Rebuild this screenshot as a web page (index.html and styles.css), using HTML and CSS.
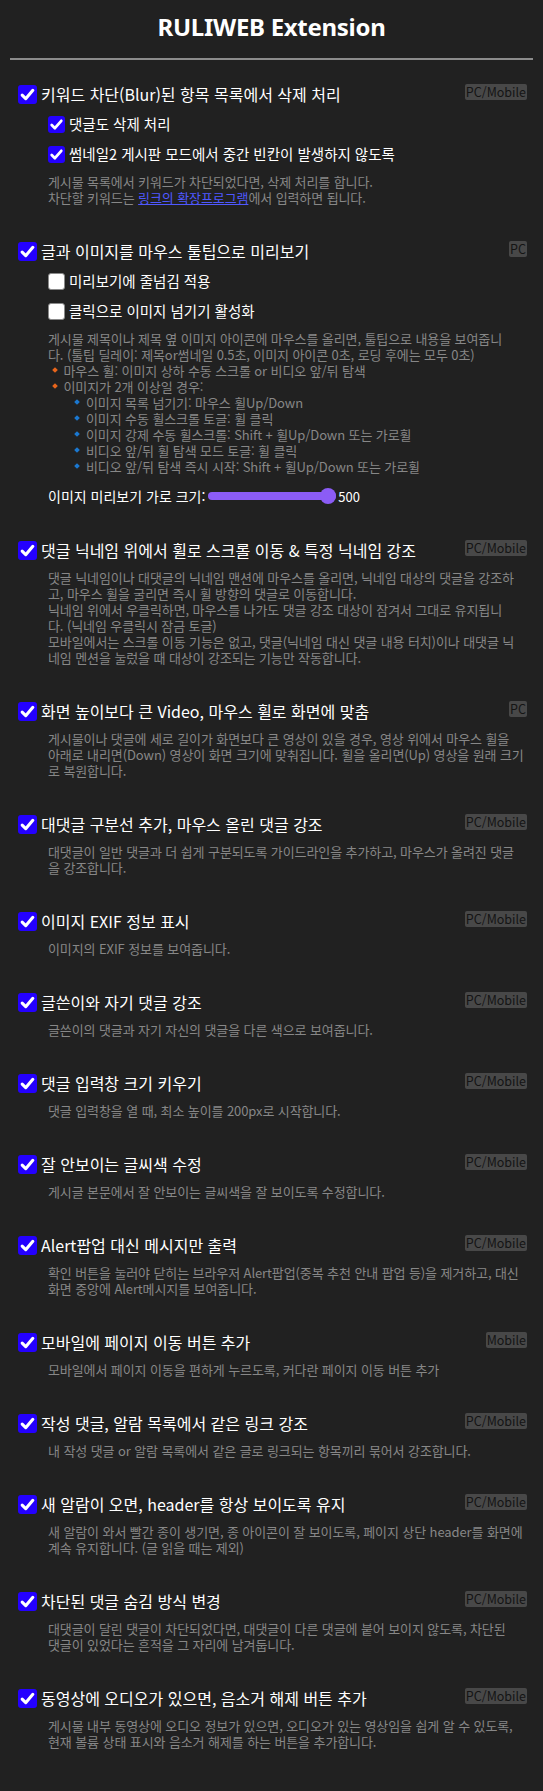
FILE: index.html
```html
<!DOCTYPE html>
<html lang="ko">
<head>
<meta charset="utf-8">
<title>RULIWEB Extension</title>
<link rel="stylesheet" href="styles.css">
</head>
<body>
<div class="page">
  <h1 class="title">RULIWEB Extension</h1>
  <hr class="divider">
  <ul class="options">
    <li class="option">
      <span class="badge">PC/Mobile</span>
      <label class="row main"><span class="box on"><svg viewBox="0 0 16 16"><path d="M3.5 8.5l3 3 6-7"/></svg></span><span>키워드 차단(Blur)된 항목 목록에서 삭제 처리</span></label>
      <label class="row sub"><span class="box on"><svg viewBox="0 0 16 16"><path d="M3.5 8.5l3 3 6-7"/></svg></span><span>댓글도 삭제 처리</span></label>
      <label class="row sub"><span class="box on"><svg viewBox="0 0 16 16"><path d="M3.5 8.5l3 3 6-7"/></svg></span><span>썸네일2 게시판 모드에서 중간 빈칸이 발생하지 않도록</span></label>
      <p class="desc">게시물 목록에서 키워드가 차단되었다면, 삭제 처리를 합니다.<br>차단할 키워드는 <a class="link" href="#">링크의 확장프로그램</a>에서 입력하면 됩니다.</p>
    </li>
    <li class="option">
      <span class="badge">PC</span>
      <label class="row main"><span class="box on"><svg viewBox="0 0 16 16"><path d="M3.5 8.5l3 3 6-7"/></svg></span><span>글과 이미지를 마우스 툴팁으로 미리보기</span></label>
      <label class="row sub"><span class="box off"></span><span>미리보기에 줄넘김 적용</span></label>
      <label class="row sub"><span class="box off"></span><span>클릭으로 이미지 넘기기 활성화</span></label>
      <div class="desc">
        게시물 제목이나 제목 옆 이미지 아이콘에 마우스를 올리면, 툴팁으로 내용을 보여줍니<br>다. (툴팁 딜레이: 제목or썸네일 0.5초, 이미지 아이콘 0초, 로딩 후에는 모두 0초)
        <ul class="bullets">
          <li>마우스 휠: 이미지 상하 수동 스크롤 or 비디오 앞/뒤 탐색</li>
          <li>이미지가 2개 이상일 경우:
            <ul class="bullets inner">
              <li>이미지 목록 넘기기: 마우스 휠Up/Down</li>
              <li>이미지 수동 휠스크롤 토글: 휠 클릭</li>
              <li>이미지 강제 수동 휠스크롤: Shift + 휠Up/Down 또는 가로휠</li>
              <li>비디오 앞/뒤 휠 탐색 모드 토글: 휠 클릭</li>
              <li>비디오 앞/뒤 탐색 즉시 시작: Shift + 휠Up/Down 또는 가로휠</li>
            </ul>
          </li>
        </ul>
      </div>
      <div class="slider-row">
        <span class="slider-label">이미지 미리보기 가로 크기:</span>
        <input class="slider" type="range" min="100" max="500" value="500">
        <span class="slider-value">500</span>
      </div>
    </li>
    <li class="option">
      <span class="badge">PC/Mobile</span>
      <label class="row main"><span class="box on"><svg viewBox="0 0 16 16"><path d="M3.5 8.5l3 3 6-7"/></svg></span><span>댓글 닉네임 위에서 휠로 스크롤 이동 &amp; 특정 닉네임 강조</span></label>
      <p class="desc">댓글 닉네임이나 대댓글의 닉네임 맨션에 마우스를 올리면, 닉네임 대상의 댓글을 강조하<br>고, 마우스 휠을 굴리면 즉시 휠 방향의 댓글로 이동합니다.<br>닉네임 위에서 우클릭하면, 마우스를 나가도 댓글 강조 대상이 잠겨서 그대로 유지됩니<br>다. (닉네임 우클릭시 잠금 토글)<br>모바일에서는 스크롤 이동 기능은 없고, 댓글(닉네임 대신 댓글 내용 터치)이나 대댓글 닉<br>네임 멘션을 눌렀을 때 대상이 강조되는 기능만 작동합니다.</p>
    </li>
    <li class="option">
      <span class="badge">PC</span>
      <label class="row main"><span class="box on"><svg viewBox="0 0 16 16"><path d="M3.5 8.5l3 3 6-7"/></svg></span><span>화면 높이보다 큰 Video, 마우스 휠로 화면에 맞춤</span></label>
      <p class="desc">게시물이나 댓글에 세로 길이가 화면보다 큰 영상이 있을 경우, 영상 위에서 마우스 휠을<br>아래로 내리면(Down) 영상이 화면 크기에 맞춰집니다. 휠을 올리면(Up) 영상을 원래 크기<br>로 복원합니다.</p>
    </li>
    <li class="option">
      <span class="badge">PC/Mobile</span>
      <label class="row main"><span class="box on"><svg viewBox="0 0 16 16"><path d="M3.5 8.5l3 3 6-7"/></svg></span><span>대댓글 구분선 추가, 마우스 올린 댓글 강조</span></label>
      <p class="desc">대댓글이 일반 댓글과 더 쉽게 구분되도록 가이드라인을 추가하고, 마우스가 올려진 댓글<br>을 강조합니다.</p>
    </li>
    <li class="option">
      <span class="badge">PC/Mobile</span>
      <label class="row main"><span class="box on"><svg viewBox="0 0 16 16"><path d="M3.5 8.5l3 3 6-7"/></svg></span><span>이미지 EXIF 정보 표시</span></label>
      <p class="desc">이미지의 EXIF 정보를 보여줍니다.</p>
    </li>
    <li class="option">
      <span class="badge">PC/Mobile</span>
      <label class="row main"><span class="box on"><svg viewBox="0 0 16 16"><path d="M3.5 8.5l3 3 6-7"/></svg></span><span>글쓴이와 자기 댓글 강조</span></label>
      <p class="desc">글쓴이의 댓글과 자기 자신의 댓글을 다른 색으로 보여줍니다.</p>
    </li>
    <li class="option">
      <span class="badge">PC/Mobile</span>
      <label class="row main"><span class="box on"><svg viewBox="0 0 16 16"><path d="M3.5 8.5l3 3 6-7"/></svg></span><span>댓글 입력창 크기 키우기</span></label>
      <p class="desc">댓글 입력창을 열 때, 최소 높이를 200px로 시작합니다.</p>
    </li>
    <li class="option">
      <span class="badge">PC/Mobile</span>
      <label class="row main"><span class="box on"><svg viewBox="0 0 16 16"><path d="M3.5 8.5l3 3 6-7"/></svg></span><span>잘 안보이는 글씨색 수정</span></label>
      <p class="desc">게시글 본문에서 잘 안보이는 글씨색을 잘 보이도록 수정합니다.</p>
    </li>
    <li class="option">
      <span class="badge">PC/Mobile</span>
      <label class="row main"><span class="box on"><svg viewBox="0 0 16 16"><path d="M3.5 8.5l3 3 6-7"/></svg></span><span>Alert팝업 대신 메시지만 출력</span></label>
      <p class="desc">확인 버튼을 눌러야 닫히는 브라우저 Alert팝업(중복 추천 안내 팝업 등)을 제거하고, 대신<br>화면 중앙에 Alert메시지를 보여줍니다.</p>
    </li>
    <li class="option">
      <span class="badge">Mobile</span>
      <label class="row main"><span class="box on"><svg viewBox="0 0 16 16"><path d="M3.5 8.5l3 3 6-7"/></svg></span><span>모바일에 페이지 이동 버튼 추가</span></label>
      <p class="desc">모바일에서 페이지 이동을 편하게 누르도록, 커다란 페이지 이동 버튼 추가</p>
    </li>
    <li class="option">
      <span class="badge">PC/Mobile</span>
      <label class="row main"><span class="box on"><svg viewBox="0 0 16 16"><path d="M3.5 8.5l3 3 6-7"/></svg></span><span>작성 댓글, 알람 목록에서 같은 링크 강조</span></label>
      <p class="desc">내 작성 댓글 or 알람 목록에서 같은 글로 링크되는 항목끼리 묶어서 강조합니다.</p>
    </li>
    <li class="option">
      <span class="badge">PC/Mobile</span>
      <label class="row main"><span class="box on"><svg viewBox="0 0 16 16"><path d="M3.5 8.5l3 3 6-7"/></svg></span><span>새 알람이 오면, header를 항상 보이도록 유지</span></label>
      <p class="desc">새 알람이 와서 빨간 종이 생기면, 종 아이콘이 잘 보이도록, 페이지 상단 header를 화면에<br>계속 유지합니다. (글 읽을 때는 제외)</p>
    </li>
    <li class="option">
      <span class="badge">PC/Mobile</span>
      <label class="row main"><span class="box on"><svg viewBox="0 0 16 16"><path d="M3.5 8.5l3 3 6-7"/></svg></span><span>차단된 댓글 숨김 방식 변경</span></label>
      <p class="desc">대댓글이 달린 댓글이 차단되었다면, 대댓글이 다른 댓글에 붙어 보이지 않도록, 차단된<br>댓글이 있었다는 흔적을 그 자리에 남겨둡니다.</p>
    </li>
    <li class="option">
      <span class="badge">PC/Mobile</span>
      <label class="row main"><span class="box on"><svg viewBox="0 0 16 16"><path d="M3.5 8.5l3 3 6-7"/></svg></span><span>동영상에 오디오가 있으면, 음소거 해제 버튼 추가</span></label>
      <p class="desc">게시물 내부 동영상에 오디오 정보가 있으면, 오디오가 있는 영상임을 쉽게 알 수 있도록,<br>현재 볼륨 상태 표시와 음소거 해제를 하는 버튼을 추가합니다.</p>
    </li>
  </ul>
</div>
</body>
</html>
```
FILE: styles.css
```css
* { box-sizing: border-box; }
html, body { margin: 0; padding: 0; background: #212121; }
body { font-family: "Noto Sans CJK KR", "Noto Sans", sans-serif; color: #fff; }

.page { width: 543px; padding: 12px 10px 4px; }

.title {
  margin: 0;
  font-family: "Noto Sans", "Noto Sans CJK KR", sans-serif;
  font-size: 24px;
  font-weight: 700;
  line-height: 30px;
  letter-spacing: -0.3px;
  text-align: center;
  color: #fff;
}

.divider {
  margin: 16px 0 0;
  border: 0;
  height: 2px;
  background: #8c8c8c;
}

.options { list-style: none; margin: 24px 0 0; padding: 0; }

.option { position: relative; padding: 0 6px 26px 8px; }

.badge {
  position: absolute;
  top: 0;
  right: 6px;
  font-size: 12.5px;
  line-height: 16px;
  padding: 0 1px;
  background: #484848;
  color: #141414;
  border-radius: 2px;
}

.row { display: flex; align-items: center; height: 20px; line-height: 20px; white-space: nowrap; gap: 4px; }
.row.main { margin-top: 9px; font-size: 16px; }
.row.sub { margin-top: 10px; padding-left: 30px; font-size: 14.5px; }

.box {
  flex: none;
  display: inline-flex;
  align-items: center;
  justify-content: center;
  border-radius: 3px;
}
.row.main .box { width: 19px; height: 19px; }
.row.sub .box { width: 17px; height: 17px; }
.box.on { background: #2400ff; }
.box.off { background: #fff; border: 1.5px solid #8a8a8a; }
.box svg { width: 100%; height: 100%; }
.box svg path { fill: none; stroke: #fff; stroke-width: 2.6; stroke-linecap: round; stroke-linejoin: round; }

.desc {
  margin: 10px 0 0;
  padding-left: 30px;
  font-size: 13px;
  line-height: 16px;
  letter-spacing: -0.1px;
  color: #878787;
  white-space: nowrap;
}
.link { color: #4f58ff; text-decoration: underline; }

.bullets { list-style: none; margin: 0; padding: 0; }
.bullets li { padding-left: 15.5px; }
.bullets li::before {
  content: "";
  display: inline-block;
  width: 4px;
  height: 4px;
  margin: 0 6.8px 0 -10.8px;
  vertical-align: 3.7px;
  background: #e8651c;
  transform: rotate(45deg);
}
.bullets.inner { padding-left: 7px; }
.bullets.inner li::before { background: #1b78d0; }

.slider-row {
  display: flex;
  align-items: center;
  height: 18px;
  margin-top: 12px;
  padding-left: 30px;
  color: #fff;
}
.slider-label { font-size: 14px; margin-right: 2.5px; }
.slider {
  -webkit-appearance: none;
  appearance: none;
  width: 128px;
  height: 8px;
  margin: 0 2.5px 0 0;
  border-radius: 4px;
  background: #8b5cf6;
}
.slider::-webkit-slider-thumb {
  -webkit-appearance: none;
  appearance: none;
  width: 16px;
  height: 16px;
  border-radius: 50%;
  background: #8b5cf6;
}
.slider-value { font-size: 13px; }
```
